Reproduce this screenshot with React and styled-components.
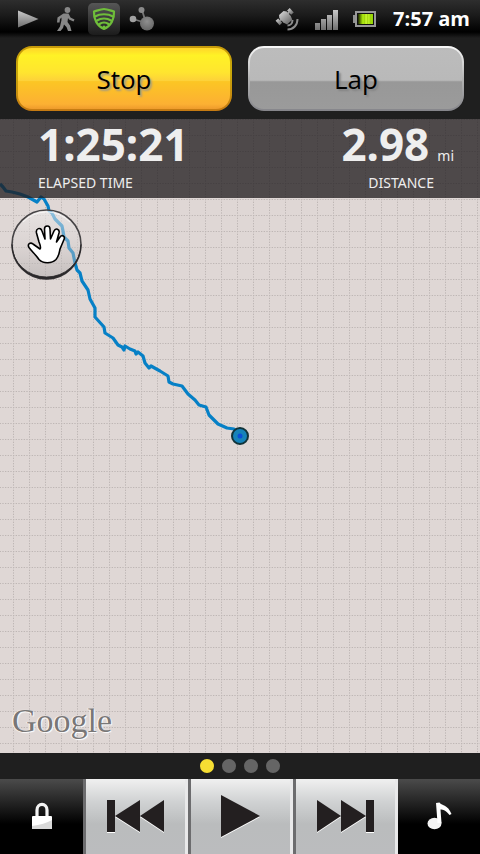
import React from 'react';
import { useState } from "react";
import styled, { createGlobalStyle } from "styled-components";

const GlobalStyle = createGlobalStyle`
  *{
    box-sizing: border-box;
  }
  body{
    margin: 0;
    background-color: #1f1f1f;
    font-family: "Noto Sans", "Open Sans", sans-serif;
  }
  button{
    margin: 0;
    padding: 0;
    border: none;
    background: none;
    font-family: inherit;
    cursor: pointer;
  }
  svg{
    display: block;
  }
`;
const Page = styled.div`
  display: flex;
  flex-direction: column;
  min-height: 100vh;
`;
const StatusBar = styled.div`
  display: flex;
  justify-content: space-between;
  height: 38px;
  padding: 0 10px 0 12px;
  background: linear-gradient(#2e2e2e, #1b1b1b 40%, #000 84%, #1f1f1f);
`;
const StatusGroup = styled.div`
  display: flex;
  gap: 6px;
  padding-top: 3px;
`;
const StatusIcon = styled.span`
  width: 32px;
  height: 32px;
  border-radius: 5px;
  background: ${({ $active }) => ($active ? 'linear-gradient(#565656, #1c1c1c)' : 'none')};
`;
const Clock = styled.span`
  padding-left: 7px;
  color: white;
  font-family: "Open Sans", sans-serif;
  font-size: 20px;
  font-weight: 700;
  line-height: 32px;
`;
const Actions = styled.div`
  display: flex;
  gap: 16px;
  padding: 8px 16px;
  background-color: #1f1f1f;
`;
const ActionButton = styled.button`
  flex: 1;
  height: 65px;
  border: 2px solid transparent;
  border-radius: 16px;
  background: ${({ $primary }) => ($primary
    ? 'linear-gradient(#ffd52a, #fff226 12%, #ffe52f 40%, #fdd13a 54%, #fcc624 55%, #fcb033 92%, #ee9b2c) padding-box, linear-gradient(#c79a0a, #c9a90a 40%, #c67a12) border-box'
    : 'linear-gradient(#bcbcbc, #b9b9b9 53%, #a5a5a5 54%, #989898 56%, #9b9b9b) padding-box, linear-gradient(#fafafa, #b4b4b4 50%, #85858a) border-box')};
  color: black;
  font-family: "Open Sans", sans-serif;
  font-size: 26px;
  text-shadow: 2px 2px 2px ${({ $primary }) => ($primary ? '#a89c80' : '#858585')};
`;
const Map = styled.main`
  position: relative;
  flex: 1;
  background-color: #dfd7d5;
`;
const MapCanvas = styled.svg`
  position: absolute;
  top: 0;
  left: 0;
  width: 100%;
  height: 100%;
`;
const Stats = styled.div`
  position: relative;
  display: flex;
  justify-content: space-between;
  height: 79px;
  padding: 0 26px 0 38px;
  background-color: rgba(31, 28, 30, 0.76);
  color: #eee;
`;
const Stat = styled.div`
  display: flex;
  flex-direction: column;
  align-items: ${({ $right }) => ($right ? 'flex-end' : 'flex-start')};
`;
const StatValue = styled.div`
  display: flex;
  align-items: baseline;
  gap: 8px;
  height: 54px;
  line-height: 50px;
  strong{
    font-size: 44px;
    font-weight: 700;
  }
  span{
    font-size: 14px;
  }
`;
const StatLabel = styled.div`
  padding-right: ${({ $right }) => ($right ? '20px' : '0')};
  font-size: 14px;
  line-height: 20px;
`;
const PanButton = styled.button`
  position: absolute;
  top: 90px;
  left: 11px;
  width: 71px;
  height: 71px;
`;
const Attribution = styled.span`
  position: absolute;
  left: 12px;
  bottom: 12px;
  color: #797777;
  font-family: "Liberation Serif", serif;
  font-size: 34px;
  line-height: 40px;
  text-shadow: 1px 1px 1px white, -1px 0 1px white;
`;
const Pager = styled.div`
  display: flex;
  justify-content: center;
  align-items: center;
  gap: 8px;
  height: 26px;
  background-color: #1f1f1f;
`;
const Dot = styled.button`
  width: 14px;
  height: 14px;
  border-radius: 50%;
  background-color: ${({ $active }) => ($active ? '#f6de33' : '#656565')};
`;
const Player = styled.div`
  display: grid;
  grid-template-columns: 83fr 105fr 105fr 105fr 82fr;
  height: 75px;
`;
const SideButton = styled.button`
  display: flex;
  justify-content: center;
  align-items: center;
  background: linear-gradient(#4b4b4b, #000 60%);
`;
const MediaButton = styled.button`
  display: flex;
  justify-content: center;
  align-items: center;
  border-left: 3px solid #6c6c6e;
  border-right: 3px solid #e9e9ea;
  background: linear-gradient(#f0f0f0, #d0d2d3 30%, #babcbd 60%, #bbbcbe);
`;

const track = '0,184 3,187 6,191 12,192 20,194 28,197 37,202 41,197 44,199 48,206 49,211 52,213 55,219 62,226 63,231 64,237 68,241 69,248 73,253 75,263 77,270 80,273 82,281 88,290 90,299 95,308 95,317 104,327 105,333 113,338 118,345 122,347 124,350 125,346 130,349 135,351 136,354 138,352 143,356 145,363 149,368 151,366 160,371 168,376 169,382 173,384 182,386 188,394 195,400 199,405 206,407 209,415 218,424 227,428 234,429 240,433';

const Route = () => (
  <MapCanvas aria-hidden="true">
    <defs>
      <pattern id="grid" x="13" y="0" width="16" height="16" patternUnits="userSpaceOnUse">
        <path d="M0.5 0V16M0 0.5H16" stroke="#beb6b4" strokeDasharray="1.333 1.333" fill="none" />
      </pattern>
    </defs>
    <rect width="100%" height="100%" fill="url(#grid)" />
    <g transform="translate(0 -119)">
      <polyline points={track} fill="none" stroke="#0680c6" strokeWidth="3.2" strokeLinejoin="round" />
      <circle cx="240" cy="436" r="8" fill="#1683b9" stroke="#12343a" strokeWidth="2" />
      <circle cx="240" cy="436" r="2.5" fill="#0a4fd8" />
    </g>
  </MapCanvas>
);

const HandIcon = () => (
  <svg width="71" height="71" viewBox="0 0 71 71">
    <defs>
      <linearGradient id="glass" x1="0" y1="0" x2="0" y2="1">
        <stop offset="0" stopColor="#f0eeee" stopOpacity="0.6" />
        <stop offset="0.5" stopColor="#d5d0d0" stopOpacity="0.4" />
        <stop offset="1" stopColor="#a8a4a4" stopOpacity="0.5" />
      </linearGradient>
    </defs>
    <circle cx="35.5" cy="35.5" r="34.5" fill="url(#glass)" stroke="#454345" strokeWidth="1.6" />
    <path d="M1 35.500A34.500 34.500 0 0 0 70 35.500A34.500 32.500 0 0 1 1 35.500Z" fill="#292729" stroke="#292729" strokeWidth="0.8" />
    <path d="M12 13A32.500 32.500 0 0 1 59 13" fill="none" stroke="#fff" strokeOpacity="0.7" />
    <path
      d="M28 50.500C25 46 20.500 42 18 38.500C16 35 19.500 33 22 35L29 40C30 39 29.500 36.500 28 33L25.500 24C24.500 19.500 29.500 17.500 31 22L34 30L33.500 20C33.500 16 39 16 39 20L39.500 30L43 22C44.500 18.500 49 20 48 24L45.500 33L49 28C51 25 54.500 27.500 53 30.500L49 40C48 45 48 47 45 50.500C41 54.500 32 55 28 50.500Z"
      fill="#fff" stroke="#000" strokeWidth="1.600" strokeLinejoin="round"
    />
  </svg>
);

const Gray = ({ id }) => (
  <linearGradient id={id} x1="0" y1="0" x2="0" y2="1">
    <stop offset="0" stopColor="#c9c9c9" />
    <stop offset="1" stopColor="#6f6f6f" />
  </linearGradient>
);

const PlayStatusIcon = () => (
  <svg width="32" height="32">
    <defs><Gray id="g1" /></defs>
    <path d="M6 7.500L26.500 16L6 24.500Z" fill="url(#g1)" />
  </svg>
);

const WalkIcon = () => (
  <svg width="32" height="32" fill="#878787">
    <circle cx="17.500" cy="7" r="2.900" />
    <path d="M13.500 10.500H18.500L20.500 14.500L24.500 16.500L23.500 18.500L19 16.500L18 15L17.500 19L20 22.500L21.500 28H18L16.500 24L14 21.500L13 25L10.500 28H7L10 23.500L11.500 17V14.500L10 16L9.500 19.500H7L7.500 14.500Z" />
  </svg>
);

const ShieldIcon = () => (
  <svg width="32" height="32" fill="none" stroke="#6fbe3a" strokeWidth="2.200" strokeLinecap="round">
    <path d="M16 6C13 6 9.500 7.500 6 8.500C5.500 16 9 23 16 26C23 23 26.500 16 26 8.500C22.500 7.500 19 6 16 6Z" strokeLinejoin="round" />
    <path d="M7 13.500C12 10.500 20 10.500 25 13.500M9 17.500C13 14.800 19 14.800 23 17.500M11.500 21C14 19.200 18 19.200 20.500 21" />
    <circle cx="16" cy="24" r="1.500" fill="#6fbe3a" stroke="none" />
  </svg>
);

const MoleculeIcon = () => (
  <svg width="32" height="32">
    <defs>
      <radialGradient id="ball" cx="0.5" cy="0.35" r="0.65">
        <stop offset="0" stopColor="#8f8f8f" />
        <stop offset="1" stopColor="#666" />
      </radialGradient>
    </defs>
    <path d="M7 16L20 20L16 7" fill="none" stroke="#777" strokeWidth="1.800" />
    <circle cx="21" cy="20.500" r="7" fill="url(#ball)" />
    <circle cx="7" cy="16" r="3.300" fill="#a2a2a2" />
    <circle cx="15.500" cy="7" r="3" fill="#8a8a8a" />
  </svg>
);

const SatelliteIcon = () => (
  <svg width="32" height="32">
    <defs><Gray id="g2" /></defs>
    <g transform="rotate(-42 13 14)" fill="url(#g2)">
      <rect x="3.500" y="10.500" width="3.500" height="6" />
      <rect x="7" y="12.500" width="12" height="2" />
      <path d="M8 11L10 8.500H16L18 11V17L16.500 21H9.500L8 17Z" />
      <rect x="19" y="10.500" width="3.500" height="6" />
    </g>
    <path d="M15.500 22.500C18 22.500 20.500 20.500 20.500 17M15.500 26.500C21.500 26.500 25.500 22 25.500 16" fill="none" stroke="#8c8c8c" strokeWidth="2" />
  </svg>
);

const SignalIcon = () => (
  <svg width="32" height="32">
    <defs><Gray id="g3" /></defs>
    <path d="M5 20H10V27H5ZM11 16H16V27H11ZM17 12H22V27H17ZM23 7H28V27H23Z" fill="url(#g3)" />
  </svg>
);

const BatteryIcon = () => (
  <svg width="32" height="32">
    <defs>
      <linearGradient id="charge">
        <stop offset="0" stopColor="#1c2400" />
        <stop offset="0.3" stopColor="#a4e00c" />
        <stop offset="0.6" stopColor="#c6f52d" />
        <stop offset="1" stopColor="#8fd000" />
      </linearGradient>
    </defs>
    <rect x="5" y="12" width="2" height="8" fill="#919191" />
    <rect x="8" y="9" width="19" height="14" fill="#111" stroke="#989898" strokeWidth="2" />
    <rect x="10" y="11" width="15" height="10" fill="url(#charge)" />
    <path d="M16.500 11V21M19.500 11V21M22.500 11V21" stroke="#8fc400" strokeOpacity="0.5" />
  </svg>
);

const LockIcon = () => (
  <svg width="22" height="32">
    <path d="M6 16V9C6 1.500 16 1.500 16 9V16" fill="none" stroke="#f2f2f2" strokeWidth="3.200" />
    <rect x="1" y="15" width="20" height="13" rx="1" fill="#fff" />
    <path d="M1 25C9 24 16 22 21 19V28H1Z" fill="#d9d9d9" />
  </svg>
);

const NoteIcon = () => (
  <svg width="26" height="32">
    <ellipse cx="8.500" cy="22.500" rx="7" ry="5.800" fill="#f4f4f4" />
    <path d="M10 2L13.500 1.500C15 4.500 22 3.500 25.500 13L23.500 14C20 9.500 17 8.500 14.500 8.500L15.500 22H11.500Z" fill="#fff" />
  </svg>
);

/* each glyph is drawn twice, the white copy gives the lower highlight */
const MediaIcon = ({ d }) => (
  <svg width="57" height="45" viewBox="0 0 57 45">
    <path d={d} fill="#fff" transform="translate(0 1)" />
    <path d={d} fill="#231f20" />
  </svg>
);

const media = [
  { name: 'Previous', d: 'M0 6H8V38H0ZM8 22L33 6V38ZM33 22L57 6V38Z' },
  { name: 'Play', d: 'M9 1L48 22L9 43Z' },
  { name: 'Next', d: 'M0 6L24 22L0 38ZM24 6L49 22L24 38ZM49 6H57V38H49Z' },
];

const App = () => {
  const [page, setPage] = useState(0);

  return (
    <Page>
      <GlobalStyle />
      <StatusBar>
        <StatusGroup>
          <StatusIcon><PlayStatusIcon /></StatusIcon>
          <StatusIcon><WalkIcon /></StatusIcon>
          <StatusIcon $active><ShieldIcon /></StatusIcon>
          <StatusIcon><MoleculeIcon /></StatusIcon>
        </StatusGroup>
        <StatusGroup>
          <StatusIcon><SatelliteIcon /></StatusIcon>
          <StatusIcon><SignalIcon /></StatusIcon>
          <StatusIcon><BatteryIcon /></StatusIcon>
          <Clock>7:57 am</Clock>
        </StatusGroup>
      </StatusBar>
      <Actions>
        <ActionButton $primary>Stop</ActionButton>
        <ActionButton>Lap</ActionButton>
      </Actions>
      <Map>
        <Route />
        <Stats>
          <Stat>
            <StatValue><strong>1:25:21</strong></StatValue>
            <StatLabel>ELAPSED TIME</StatLabel>
          </Stat>
          <Stat $right>
            <StatValue><strong>2.98</strong><span>mi</span></StatValue>
            <StatLabel $right>DISTANCE</StatLabel>
          </Stat>
        </Stats>
        <PanButton aria-label="Pan map"><HandIcon /></PanButton>
        <Attribution>Google</Attribution>
      </Map>
      <Pager>
        {[0, 1, 2, 3].map((i) => (
          <Dot key={i} $active={i === page} aria-label={`Page ${i + 1}`} onClick={() => setPage(i)} />
        ))}
      </Pager>
      <Player>
        <SideButton aria-label="Lock"><LockIcon /></SideButton>
        {media.map(({ name, d }) => (
          <MediaButton key={name} aria-label={name}><MediaIcon d={d} /></MediaButton>
        ))}
        <SideButton aria-label="Music"><NoteIcon /></SideButton>
      </Player>
    </Page>
  )
}

export default App;
